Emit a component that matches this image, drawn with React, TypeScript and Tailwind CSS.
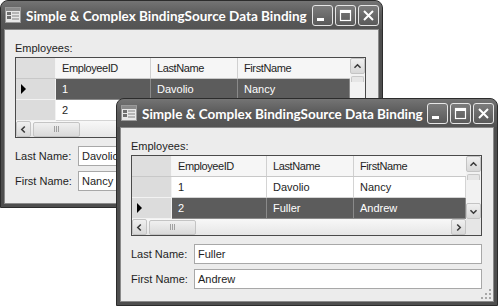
import React from "react";

type Row = { id: string; last: string; first: string };
const ROWS: Row[] = [
  { id: "1", last: "Davolio", first: "Nancy" },
  { id: "2", last: "Fuller", first: "Andrew" },
];

function AppIcon() {
  return (
    <svg width="16" height="16" viewBox="0 0 16 16" className="shrink-0">
      <rect x="0.5" y="0.5" width="15" height="15" fill="#e8e8e8" stroke="#9a9a9a" />
      <rect x="1" y="1" width="14" height="3" fill="#8a8a8a" />
      <rect x="2" y="5" width="4" height="3" fill="#6e6e6e" />
      <rect x="2" y="9" width="4" height="3" fill="#6e6e6e" />
      <rect x="7" y="5" width="7" height="2" fill="#b5b5b5" />
      <rect x="7" y="8" width="7" height="2" fill="#b5b5b5" />
      <rect x="7" y="11" width="7" height="2" fill="#b5b5b5" />
    </svg>
  );
}

function Btn({ children }: { children: React.ReactNode }) {
  return (
    <div className="flex h-[21px] w-[21px] items-center justify-center rounded-[3px] border border-[#e6e6e6] bg-gradient-to-b from-[#7c7c7c] to-[#5a5a5a]">
      {children}
    </div>
  );
}

function TitleButtons() {
  return (
    <div className="flex shrink-0 gap-[2px]">
      <Btn>
        <svg width="19" height="19" viewBox="0 0 19 19">
          <rect x="4" y="12" width="7" height="3" fill="#fff" />
        </svg>
      </Btn>
      <Btn>
        <svg width="19" height="19" viewBox="0 0 19 19">
          <rect x="4.5" y="4.5" width="10" height="10" fill="none" stroke="#fff" strokeWidth="1.2" />
          <rect x="4" y="4" width="11" height="3" fill="#fff" />
        </svg>
      </Btn>
      <Btn>
        <svg width="19" height="19" viewBox="0 0 19 19">
          <path d="M5 5 L14 14 M14 5 L5 14" stroke="#fff" strokeWidth="2" />
        </svg>
      </Btn>
    </div>
  );
}

function Chevron({ dir }: { dir: "up" | "down" | "left" | "right" }) {
  const d =
    dir === "up"
      ? "M4 9 L7.5 5.5 L11 9"
      : dir === "down"
      ? "M4 6 L7.5 9.5 L11 6"
      : dir === "left"
      ? "M9 4 L5.5 7.5 L9 11"
      : "M6 4 L9.5 7.5 L6 11";
  return (
    <svg width="15" height="15" viewBox="0 0 15 15">
      <path d={d} fill="none" stroke="#3a3a3a" strokeWidth="1.8" />
    </svg>
  );
}

function ScrollBtn({ dir }: { dir: "up" | "down" | "left" | "right" }) {
  return (
    <div className="flex h-[16px] w-[15px] shrink-0 items-center justify-center rounded-[2px] border border-[#c4c4c4] bg-gradient-to-b from-[#f0f0f0] to-[#d8d8d8]">
      <Chevron dir={dir} />
    </div>
  );
}

function Grid({ sel }: { sel: number }) {
  return (
    <div className="mt-[2px] flex h-[81px] w-[351px] flex-col border border-[#4a4a4a] bg-white">
      <div className="flex h-[63px]">
        <div className="flex flex-1 flex-col">
          <div className="flex h-[21px] border-b border-[#c8c8c8]">
            <div className="w-[40px] border-r border-[#f4f4f4] bg-[#dedede]" />
            <div className="flex w-[95px] items-center border-r border-[#d0d0d0] bg-[#f6f6f6] pl-[6px] tracking-[-0.4px]">EmployeeID</div>
            <div className="flex w-[87px] items-center border-r border-[#d0d0d0] bg-[#f6f6f6] pl-[6px] tracking-[-0.4px]">LastName</div>
            <div className="flex flex-1 items-center bg-[#f6f6f6] pl-[6px] tracking-[-0.4px]">FirstName</div>
          </div>
          {ROWS.map((r, i) => {
            const s = i === sel;
            const cell = s
              ? "flex items-center border-r border-b border-[#8a8a8a] bg-[#5c5c5c] pl-[6px] text-white"
              : "flex items-center border-r border-b border-[#d4d4d4] bg-white pl-[6px]";
            return (
              <div key={r.id} className="flex h-[21px]">
                <div className="flex w-[40px] items-center border-r border-b border-[#f2f2f2] bg-[#dcdcdc] pl-[4px]">
                  {s && (
                    <svg width="8" height="10" viewBox="0 0 8 10">
                      <path d="M1 0 L6 5 L1 10 Z" fill="#000" />
                    </svg>
                  )}
                </div>
                <div className={`${cell} w-[95px]`}>{r.id}</div>
                <div className={`${cell} w-[87px]`}>{r.last}</div>
                <div className={`${cell} flex-1`}>{r.first}</div>
              </div>
            );
          })}
        </div>
        <div className="flex w-[15px] flex-col bg-[#f2f2f2]">
          <ScrollBtn dir="up" />
          <div className="flex-1 px-[1px] pt-[2px]">
            <div className="h-[6px] rounded-t-[2px] border border-b-0 border-[#c8c8c8] bg-[#e6e6e6]" />
          </div>
          <ScrollBtn dir="down" />
        </div>
      </div>
      <div className="flex h-[16px]">
        <div className="flex flex-1 items-center bg-gradient-to-b from-[#f8f8f8] to-[#e6e6e6]">
          <ScrollBtn dir="left" />
          <div className="ml-[2px] flex h-[15px] w-[47px] items-center justify-center rounded-[2px] border border-[#c4c4c4] bg-gradient-to-b from-[#f0f0f0] to-[#dadada]">
            <svg width="6" height="6" viewBox="0 0 6 6">
              <path d="M0.5 0 V6 M2.5 0 V6 M4.5 0 V6" stroke="#a0a0a0" strokeWidth="1" />
            </svg>
          </div>
          <div className="flex-1" />
          <ScrollBtn dir="right" />
        </div>
        <div className="w-[15px] bg-[#e6e6e6]" />
      </div>
    </div>
  );
}

function Field({ label, value, mt }: { label: string; value: string; mt: string }) {
  return (
    <div className={`flex items-center ${mt}`}>
      <div className="w-[63px]">{label}</div>
      <div className="flex h-[20px] w-[288px] items-center border border-[#a8a8a8] bg-white pl-[3px]">{value}</div>
    </div>
  );
}

function Win({ sel, last, first, grip }: { sel: number; last: string; first: string; grip?: boolean }) {
  return (
    <div className="flex h-full w-full flex-col rounded-t-[8px] border border-[#2c2c2c] bg-[#4e4e4e]">
      <div className="flex h-[28px] shrink-0 items-center rounded-t-[7px] bg-gradient-to-b from-[#747474] via-[#5a5a5a] to-[#535353] pl-[4px] pr-[3px]">
        <AppIcon />
        <div className="ml-[5px] mt-[2px] min-w-0 flex-1 whitespace-nowrap font-['Lato',sans-serif] text-[13.5px] font-bold leading-[16px] text-white">
          Simple &amp; Complex BindingSource Data Binding
        </div>
        <TitleButtons />
      </div>
      <div className="relative mx-[3px] mb-[3px] flex flex-1 flex-col border border-[#8a8a8a] bg-[#ececec] pl-[10px] pt-[12px]">
        <div className="leading-[13px]">Employees:</div>
        <Grid sel={sel} />
        <Field label="Last Name:" value={last} mt="mt-[8px]" />
        <Field label="First Name:" value={first} mt="mt-[5px]" />
        {grip && (
          <svg width="12" height="12" viewBox="0 0 12 12" className="absolute bottom-[1px] right-[1px]">
            {[
              [9, 1],
              [9, 5],
              [5, 5],
              [9, 9],
              [5, 9],
              [1, 9],
            ].map(([x, y]) => (
              <rect key={`${x}-${y}`} x={x} y={y} width="2" height="2" fill="#a8a8a8" />
            ))}
          </svg>
        )}
      </div>
    </div>
  );
}

export default function App() {
  return (
    <div className="relative h-[306px] w-[500px] overflow-hidden bg-white font-['Liberation_Sans',Arial,sans-serif] text-[11px] text-[#1e1e1e]">
      <div className="absolute left-0 top-0 h-[208px] w-[383px]">
        <Win sel={0} last="Davolio" first="Nancy" />
      </div>
      <div className="absolute left-[116px] top-[98px] h-[208px] w-[382px]">
        <Win sel={1} last="Fuller" first="Andrew" grip />
      </div>
    </div>
  );
}
